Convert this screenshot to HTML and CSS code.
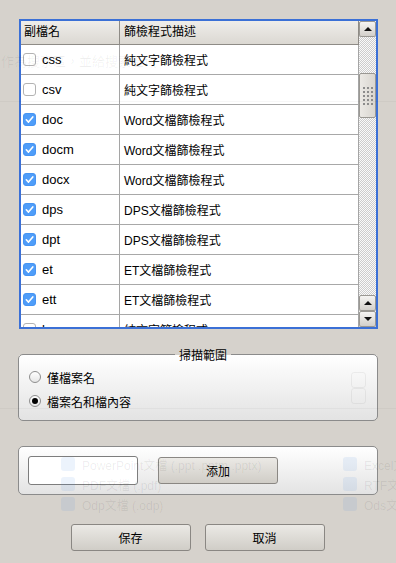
FILE: index.html
```html
<!DOCTYPE html>
<html lang="zh-Hant">
<head>
    <meta charset="UTF-8">
    <meta name="viewport" content="width=device-width, initial-scale=1.0">
    <title>篩檢程式設定</title>
    <link rel="stylesheet" href="styles.css">
</head>
<body>
    <div class="dialog">
        <div class="file-table">
            <div class="grid-area">
                <div class="thead">
                    <div class="th col-ext">副檔名</div>
                    <div class="th col-desc">篩檢程式描述</div>
                </div>
                <div class="tbody">
                    <div class="row">
                        <div class="cell col-ext"><span class="check"></span>css</div>
                        <div class="cell col-desc">純文字篩檢程式</div>
                    </div>
                    <div class="row">
                        <div class="cell col-ext"><span class="check"></span>csv</div>
                        <div class="cell col-desc">純文字篩檢程式</div>
                    </div>
                    <div class="row">
                        <div class="cell col-ext"><span class="check on"></span>doc</div>
                        <div class="cell col-desc">Word文檔篩檢程式</div>
                    </div>
                    <div class="row">
                        <div class="cell col-ext"><span class="check on"></span>docm</div>
                        <div class="cell col-desc">Word文檔篩檢程式</div>
                    </div>
                    <div class="row">
                        <div class="cell col-ext"><span class="check on"></span>docx</div>
                        <div class="cell col-desc">Word文檔篩檢程式</div>
                    </div>
                    <div class="row">
                        <div class="cell col-ext"><span class="check on"></span>dps</div>
                        <div class="cell col-desc">DPS文檔篩檢程式</div>
                    </div>
                    <div class="row">
                        <div class="cell col-ext"><span class="check on"></span>dpt</div>
                        <div class="cell col-desc">DPS文檔篩檢程式</div>
                    </div>
                    <div class="row">
                        <div class="cell col-ext"><span class="check on"></span>et</div>
                        <div class="cell col-desc">ET文檔篩檢程式</div>
                    </div>
                    <div class="row">
                        <div class="cell col-ext"><span class="check on"></span>ett</div>
                        <div class="cell col-desc">ET文檔篩檢程式</div>
                    </div>
                    <div class="row">
                        <div class="cell col-ext"><span class="check"></span>h</div>
                        <div class="cell col-desc">純文字篩檢程式</div>
                    </div>
                </div>
            </div>
            <div class="vscroll">
                <div class="sb-btn"><span class="arrow up"></span></div>
                <div class="sb-gap"></div>
                <div class="sb-thumb"><span class="grip"></span></div>
                <div class="sb-fill"></div>
                <div class="sb-btn"><span class="arrow up"></span></div>
                <div class="sb-btn"><span class="arrow down"></span></div>
            </div>
        </div>

        <fieldset class="group scan-range">
            <legend>掃描範圍</legend>
            <label class="radio-row"><span class="radio"></span>僅檔案名</label>
            <label class="radio-row"><span class="radio on"></span>檔案名和檔內容</label>
        </fieldset>

        <div class="group add-box">
            <input class="ext-input" type="text">
            <button class="btn add-btn">添加</button>
        </div>

        <div class="actions">
            <button class="btn">保存</button>
            <button class="btn">取消</button>
        </div>
    </div>

    <!-- faded page behind the dialog, still showing through -->
    <div class="ghost">
        <div class="ghost-text">作為搜索區，並給搜索區域</div>
        <div class="ghost-line line-a"></div>
        <div class="ghost-line line-b"></div>
        <div class="ghost-spin"><span></span><span></span></div>
        <div class="ghost-opts left">
            <div class="ghost-opt"><span class="ghost-box"></span>PowerPoint文檔 (.ppt .pptm .pptx)</div>
            <div class="ghost-opt"><span class="ghost-box"></span>PDF文檔 (.pdf)</div>
            <div class="ghost-opt"><span class="ghost-box"></span>Odp文檔 (.odp)</div>
        </div>
        <div class="ghost-opts right">
            <div class="ghost-opt"><span class="ghost-box"></span>Excel文</div>
            <div class="ghost-opt"><span class="ghost-box"></span>RTF文</div>
            <div class="ghost-opt"><span class="ghost-box"></span>Ods文</div>
        </div>
    </div>
</body>
</html>
```

FILE: styles.css
```css
body {
    margin: 0;
    width: 396px;
    height: 563px;
    overflow: hidden;
    position: relative;
    background: #d6d2cc;
    color: #000;
    font-family: "Liberation Sans", "Noto Sans CJK TC", sans-serif;
    font-size: 12px;
}
.dialog {
    padding: 19px 19px 0 18px;
}

/* extension table */
.file-table {
    margin-left: 1px;
    width: 359px;
    height: 310px;
    box-sizing: border-box;
    border: 2px solid #3b70d6;
    background: #fff;
    display: flex;
}
.grid-area {
    width: 338px;
    display: flex;
    flex-direction: column;
}
.thead {
    display: flex;
    height: 24px;
    box-sizing: border-box;
    border-bottom: 1px solid #8e8b86;
    background: linear-gradient(#efedea, #dbd8d2);
}
.th {
    line-height: 23px;
}
.col-ext {
    width: 99px;
    box-sizing: border-box;
    border-right: 1px solid #a5a5a5;
    padding-left: 3px;
}
.col-desc {
    width: 239px;
    box-sizing: border-box;
    border-right: 1px solid #a5a5a5;
    padding-left: 4px;
}
.thead .col-ext,
.thead .col-desc {
    border-right-color: #8e8b86;
}
.tbody {
    height: 282px;
    overflow: hidden;
}
.row {
    display: flex;
    height: 30px;
    flex-shrink: 0;
    box-sizing: border-box;
    border-bottom: 1px solid #a8a8a8;
}
.cell {
    display: flex;
    align-items: center;
}
.cell.col-ext {
    padding-left: 2px;
    gap: 6px;
    font-size: 13px;
}
.check {
    width: 13px;
    height: 13px;
    box-sizing: border-box;
    border: 1px solid #b3b3b3;
    border-radius: 3px;
    background: #fff;
    flex-shrink: 0;
}
.check.on {
    border-color: #4794f2;
    background: #4f9df9 url("data:image/svg+xml,%3Csvg xmlns='http://www.w3.org/2000/svg' viewBox='0 0 13 13'%3E%3Cpath d='M3.3 6.8l2.2 2.3 4.3-5.2' fill='none' stroke='%23fff' stroke-width='1.6' stroke-linecap='round' stroke-linejoin='round'/%3E%3C/svg%3E") center/13px 13px no-repeat;
}

/* scrollbar */
.vscroll {
    width: 17px;
    display: flex;
    flex-direction: column;
    background: repeating-conic-gradient(#cdcdcd 0 25%, #fafafa 0 50%) 0 0 / 2px 2px;
}
.sb-btn {
    height: 16px;
    box-sizing: border-box;
    border: 1px solid #9a9893;
    border-radius: 2px;
    background: linear-gradient(#f5f4f2, #d3d0cb);
    display: flex;
    align-items: center;
    justify-content: center;
}
.arrow {
    width: 0;
    height: 0;
    border-left: 4px solid transparent;
    border-right: 4px solid transparent;
}
.arrow.up {
    border-bottom: 4px solid #111;
}
.arrow.down {
    border-top: 4px solid #111;
}
.sb-gap {
    height: 36px;
}
.sb-thumb {
    height: 45px;
    box-sizing: border-box;
    border: 1px solid #9a9893;
    border-radius: 2px;
    background: linear-gradient(90deg, #ebe9e5, #d9d6d0);
    display: flex;
    align-items: center;
    justify-content: center;
}
.grip {
    width: 11px;
    height: 19px;
    background: radial-gradient(circle, #8c8c8c 0 0.9px, transparent 1.1px) 0 0 / 4px 4px;
}
.sb-fill {
    flex: 1;
}

/* group boxes */
.group {
    box-sizing: border-box;
    width: 360px;
    border: 1px solid #8b8b8b;
    border-radius: 5px;
    background: linear-gradient(#ffffff, #e3e3e3);
}
.scan-range {
    margin: 14px 0 0;
    padding: 0 0 7px 10px;
    min-width: 0;
}
.scan-range legend {
    margin: 0 auto;
    padding: 5px 4px 0;
    line-height: 17px;
}
.radio-row {
    display: flex;
    align-items: center;
    gap: 6px;
    height: 24px;
}
.radio {
    width: 12px;
    height: 12px;
    box-sizing: border-box;
    border: 1px solid #8e8e8e;
    border-radius: 50%;
    background: linear-gradient(#ffffff, #e6e6e6);
    display: flex;
    align-items: center;
    justify-content: center;
}
.radio.on::after {
    content: "";
    width: 6px;
    height: 6px;
    border-radius: 50%;
    background: #000;
}
.add-box {
    margin-top: 25px;
    padding: 9px;
    display: flex;
    align-items: center;
}
.ext-input {
    width: 110px;
    height: 29px;
    box-sizing: border-box;
    margin: 0;
    border: 1px solid #7d7d7d;
    border-radius: 3px;
    background: #fff;
}
.btn {
    width: 120px;
    height: 27px;
    box-sizing: border-box;
    margin: 0;
    border: 1px solid #8a8783;
    border-radius: 3px;
    background: linear-gradient(#ebe9e5, #d0cdc7);
    font-family: "Liberation Sans", "Noto Sans CJK TC", sans-serif;
    font-size: 12px;
    color: #000;
}
.add-btn {
    margin-left: 20px;
}
.actions {
    margin-top: 29px;
    display: flex;
    justify-content: center;
    gap: 14px;
}

/* ghost layer */
.ghost {
    position: absolute;
    inset: 0;
    pointer-events: none;
    color: rgba(0, 0, 0, 0.08);
}
.ghost-text {
    position: absolute;
    left: 1px;
    top: 51px;
    font-size: 13px;
    color: rgba(0, 0, 0, 0.06);
}
.ghost-line {
    position: absolute;
    left: 0;
    width: 396px;
    height: 1px;
    background: rgba(0, 0, 0, 0.03);
}
.line-a {
    top: 101px;
}
.line-b {
    top: 408px;
}
.ghost-spin {
    position: absolute;
    left: 351px;
    top: 372px;
    width: 15px;
    height: 32px;
    display: flex;
    flex-direction: column;
}
.ghost-spin span {
    flex: 1;
    border: 1px solid rgba(0, 0, 0, 0.05);
    border-radius: 3px;
}
.ghost-opts {
    position: absolute;
    top: 454px;
    display: flex;
    flex-direction: column;
}
.ghost-opts.left {
    left: 61px;
}
.ghost-opts.right {
    left: 343px;
}
.ghost-opt {
    height: 20px;
    display: flex;
    align-items: center;
    gap: 7px;
    font-size: 12px;
    white-space: nowrap;
}
.ghost-box {
    width: 14px;
    height: 14px;
    border-radius: 3px;
    background: rgba(70, 140, 230, 0.1);
}
```
